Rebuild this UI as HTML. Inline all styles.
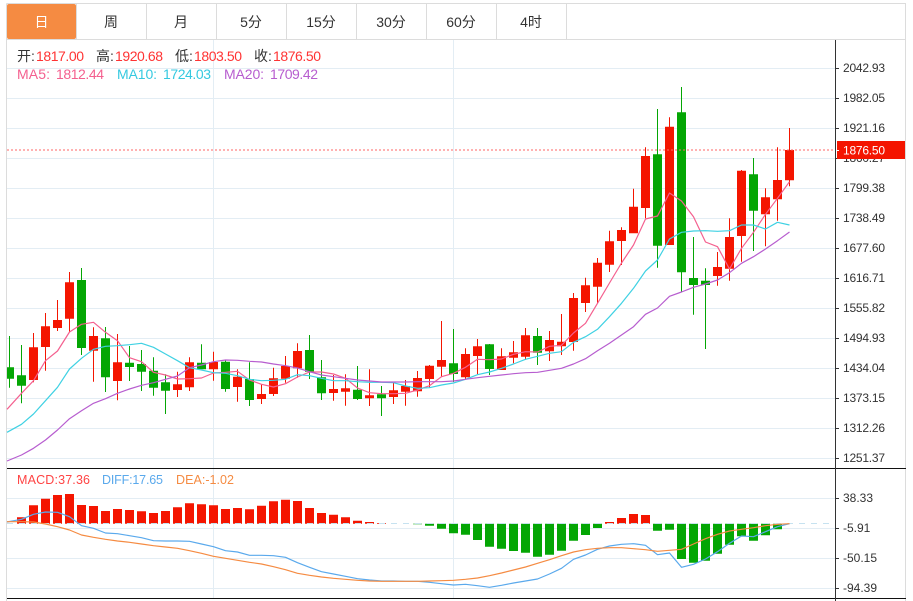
<!DOCTYPE html>
<html><head><meta charset="utf-8"><style>
html,body{margin:0;padding:0;background:#fff;width:913px;height:601px;overflow:hidden}
svg{display:block;font-family:"Liberation Sans","Noto Sans CJK SC",sans-serif}
.a{font-size:12px;fill:#333}
.h{font-size:14px}
.t{font-size:14px;fill:#333;text-anchor:middle}
.l{fill:none;stroke-width:1.2;stroke-linejoin:round}
</style></head><body>
<svg width="913" height="601" viewBox="0 0 913 601" xmlns="http://www.w3.org/2000/svg">
<path d="M7 68.5H835M7 98.5H835M7 128.5H835M7 158.5H835M7 188.5H835M7 218.5H835M7 248.5H835M7 278.5H835M7 308.5H835M7 338.5H835M7 368.5H835M7 398.5H835M7 428.5H835M7 458.5H835M7 498.5H835M7 528.5H835M7 558.5H835M7 588.5H835M213.5 40V598M453.5 40V598" stroke="#e3edf4" fill="none"/>
<path d="M6.5 3.5H905.5V601M6.5 3.5V601M6.5 39.5H905.5M76.5 3.5V39M146.5 3.5V39M216.5 3.5V39M286.5 3.5V39M356.5 3.5V39M426.5 3.5V39M496.5 3.5V39M566.5 3.5V39" stroke="#dcdcdc" fill="none"/>
<rect x="7" y="4" width="69" height="35" rx="2" fill="#f58b42"/>
<text x="41.5" y="27" class="t" style="fill:#fff">日</text>
<text x="111" y="27" class="t">周</text>
<text x="181" y="27" class="t">月</text>
<text x="251" y="27" class="t">5分</text>
<text x="321" y="27" class="t">15分</text>
<text x="391" y="27" class="t">30分</text>
<text x="461" y="27" class="t">60分</text>
<text x="531" y="27" class="t">4时</text>

<path fill="#04a604" d="M9 336h1V387.7h-1zM7 367.3h7V378.7h-7zM21 345h1V403.3h-1zM17 375.3h9V385.7h-9zM81 268h1V355h-1zM77 280h9V348h-9zM105 327h1V392h-1zM101 338.3h9V377.3h-9zM129 346h1V381h-1zM125 362.7h9V367h-9zM141 350h1V391h-1zM137 364h9V371.7h-9zM153 357.3h1V395.7h-1zM149 370.7h9V387.7h-9zM165 374.3h1V414h-1zM161 382.3h9V390.7h-9zM201 344.3h1V369.3h-1zM197 362.7h9V369.3h-9zM225 360h1V391.7h-1zM221 361.7h9V389h-9zM249 362.3h1V406h-1zM245 379h9V400h-9zM309 335h1V379h-1zM305 350h9V371.7h-9zM321 360h1V400h-1zM317 377.3h9V393.3h-9zM357 366h1V400h-1zM353 389.7h9V399h-9zM381 386h1V416h-1zM377 394.3h9V398.3h-9zM453 329h1V382h-1zM449 363.3h9V374h-9zM489 344h1V375h-1zM485 344.3h9V369h-9zM537 328h1V365h-1zM533 336h9V352.7h-9zM657 109h1V267.7h-1zM653 154.3h9V245.7h-9zM681 87h1V291.7h-1zM677 112.3h9V272.3h-9zM693 237h1V314.7h-1zM689 278h9V285h-9zM705 268.3h1V349h-1zM701 280.7h9V285h-9zM753 158h1V251h-1zM749 174.3h9V210.7h-9z"/>
<path fill="#f41500" d="M33 333h1V382.3h-1zM29 347.3h9V380h-9zM45 313h1V370.7h-1zM41 326.3h9V347h-9zM57 300h1V331h-1zM53 320h9V328h-9zM69 272h1V331.7h-1zM65 282.3h9V318.7h-9zM93 327.3h1V381.7h-1zM89 336h9V350.7h-9zM117 334h1V400.3h-1zM113 362.3h9V381h-9zM177 371.7h1V397h-1zM173 384.3h9V390h-9zM189 357.3h1V391h-1zM185 362.3h9V387.3h-9zM213 351.7h1V380.7h-1zM209 362h9V369.3h-9zM237 369.3h1V401.7h-1zM233 376.7h9V387h-9zM261 384.3h1V404h-1zM257 394h9V399h-9zM273 367.7h1V396h-1zM269 378.3h9V394h-9zM285 356h1V382.7h-1zM281 366h9V378.7h-9zM297 343.3h1V377.7h-1zM293 351h9V368.3h-9zM333 375h1V400.7h-1zM329 389h9V393h-9zM345 374.3h1V405.7h-1zM341 388.3h9V391.7h-9zM369 369.3h1V406h-1zM365 395.3h9V398.3h-9zM393 382.3h1V404h-1zM389 390.3h9V397h-9zM405 380h1V405.7h-1zM401 386h9V391.7h-9zM417 371h1V396.7h-1zM413 378h9V391.3h-9zM429 365h1V387.7h-1zM425 365.7h9V379h-9zM441 321h1V376.7h-1zM437 360h9V366.7h-9zM465 348.3h1V379.3h-1zM461 354h9V377.3h-9zM477 339h1V374.3h-1zM473 346.3h9V356h-9zM501 348.3h1V370h-1zM497 356.3h9V370h-9zM513 341h1V363.3h-1zM509 352.3h9V357.7h-9zM525 328h1V360h-1zM521 335.3h9V356.7h-9zM549 331h1V361h-1zM545 340h9V351.3h-9zM561 314h1V355h-1zM557 341.7h9V346.3h-9zM573 293h1V350.7h-1zM569 298h9V342h-9zM585 277.7h1V312h-1zM581 285.3h9V303h-9zM597 258h1V303h-1zM593 262.7h9V286.7h-9zM609 230.7h1V272h-1zM605 241.3h9V264.7h-9zM621 227.3h1V265h-1zM617 230h9V241h-9zM633 188.7h1V233.3h-1zM629 206.7h9V233.3h-9zM645 147.3h1V218.3h-1zM641 156h9V208h-9zM669 117.3h1V245h-1zM665 126.7h9V245h-9zM717 252h1V285.7h-1zM713 267h9V276h-9zM729 218.3h1V280.7h-1zM725 237h9V268.7h-9zM741 170h1V261.7h-1zM737 170.7h9V236h-9zM765 188.3h1V246.3h-1zM761 197.3h9V214.3h-9zM777 147.3h1V220.7h-1zM773 180h9V199.3h-9zM789 128h1V186.3h-1zM785 150h9V180.3h-9z"/>

<polyline class="l" stroke="#f4608f" points="7,409.3 21.5,393.3 33.5,380.7 45.5,360.7 57.5,351 69.5,332 81.5,324.3 93.5,322.3 105.5,332.3 117.5,340.7 129.5,357.7 141.5,361.7 153.5,372.3 165.5,375 177.5,379 189.5,378.7 201.5,378 213.5,373 225.5,372.3 237.5,371.3 249.5,380 261.5,384.3 273.5,387 285.5,383.7 297.5,377 309.5,372 321.5,372 333.5,374 345.5,378.3 357.5,388 369.5,392.7 381.5,393.7 393.5,393.7 405.5,393.3 417.5,390 429.5,385.7 441.5,376.7 453.5,373.3 465.5,367.3 477.5,359.3 489.5,359.7 501.5,359 513.5,354.3 525.5,351.7 537.5,352 549.5,346.3 561.5,345.3 573.5,333 585.5,323.3 597.5,303.3 609.5,283 621.5,263 633.5,245 645.5,219 657.5,216 669.5,193 681.5,201 693.5,216.7 705.5,242 717.5,246.7 729.5,269 741.5,248.3 753.5,232.3 765.5,214.3 777.5,198.3 789.5,181.7"/>
<polyline class="l" stroke="#3fd1e3" points="7,432.3 21.5,424.3 33.5,414 45.5,400.7 57.5,387.3 69.5,369 81.5,358.3 93.5,349.3 105.5,346.3 117.5,345.7 129.5,344.7 141.5,343.3 153.5,347.3 165.5,354 177.5,360.7 189.5,367.7 201.5,370 213.5,372.7 225.5,373.3 237.5,375.7 249.5,379.3 261.5,380.7 273.5,380.3 285.5,379.3 297.5,374.7 309.5,375.7 321.5,378.3 333.5,380.7 345.5,380.7 357.5,381.7 369.5,382.3 381.5,382.3 393.5,382.7 405.5,386 417.5,388.3 429.5,387.7 441.5,385 453.5,383 465.5,379.3 477.5,374.7 489.5,372 501.5,368.3 513.5,364 525.5,359.3 537.5,356.3 549.5,353.3 561.5,351.7 573.5,342.3 585.5,336.7 597.5,329.3 609.5,316.7 621.5,303.3 633.5,288.3 645.5,271 657.5,260 669.5,239 681.5,232.3 693.5,231 705.5,230.7 717.5,231.3 729.5,230.7 741.5,225 753.5,225 765.5,229 777.5,222.3 789.5,225"/>
<polyline class="l" stroke="#b75dcf" points="7,461 21.5,455 33.5,448.3 45.5,440 57.5,430 69.5,418.7 81.5,410.7 93.5,403.3 105.5,398.7 117.5,393.3 129.5,389 141.5,385.3 153.5,382.7 165.5,379.3 177.5,376 189.5,367.7 201.5,365 213.5,361.7 225.5,360 237.5,360.3 249.5,361.3 261.5,362 273.5,364 285.5,365.7 297.5,368 309.5,371.7 321.5,375 333.5,376.7 345.5,378.3 357.5,380 369.5,381 381.5,382 393.5,382 405.5,382 417.5,381.7 429.5,381.7 441.5,381.7 453.5,381 465.5,379.3 477.5,377.7 489.5,376.3 501.5,375 513.5,373.7 525.5,372.7 537.5,372.3 549.5,370.3 561.5,368.3 573.5,364 585.5,358.7 597.5,350.7 609.5,343.3 621.5,335 633.5,326.7 645.5,314.3 657.5,308 669.5,296.3 681.5,292 693.5,287.3 705.5,284 717.5,280 729.5,272.7 741.5,263.3 753.5,256.7 765.5,249 777.5,240.7 789.5,232"/>

<path fill="#f41500" d="M17 517.3h9V523.7h-9zM29 505.3h9V523.7h-9zM41 498.7h9V523.7h-9zM53 495h9V523.7h-9zM65 494h9V523.7h-9zM77 505h9V523.7h-9zM89 506h9V523.7h-9zM101 511h9V523.7h-9zM113 509h9V523.7h-9zM125 510h9V523.7h-9zM137 511.3h9V523.7h-9zM149 513h9V523.7h-9zM161 511h9V523.7h-9zM173 507.3h9V523.7h-9zM185 503.3h9V523.7h-9zM197 504.3h9V523.7h-9zM209 505.3h9V523.7h-9zM221 509h9V523.7h-9zM233 508h9V523.7h-9zM245 509.3h9V523.7h-9zM257 505.7h9V523.7h-9zM269 501.3h9V523.7h-9zM281 499.7h9V523.7h-9zM293 501h9V523.7h-9zM305 508h9V523.7h-9zM317 513h9V523.7h-9zM329 514.7h9V523.7h-9zM341 517.3h9V523.7h-9zM353 520.7h9V523.7h-9zM365 522h9V523.7h-9zM377 523h9V523.7h-9zM605 522h9V523.7h-9zM617 518h9V523.7h-9zM629 514h9V523.7h-9zM641 515h9V523.7h-9z"/>
<path fill="#04a604" d="M413 523.7h9V524.3h-9zM425 523.7h9V525.7h-9zM437 523.7h9V528.7h-9zM449 523.7h9V533.3h-9zM461 523.7h9V534.7h-9zM473 523.7h9V540h-9zM485 523.7h9V546.7h-9zM497 523.7h9V548.7h-9zM509 523.7h9V551h-9zM521 523.7h9V552.7h-9zM533 523.7h9V556.7h-9zM545 523.7h9V554.7h-9zM557 523.7h9V550.7h-9zM569 523.7h9V540.7h-9zM581 523.7h9V535h-9zM593 523.7h9V528h-9zM653 523.7h9V530.7h-9zM665 523.7h9V529.7h-9zM677 523.7h9V559h-9zM689 523.7h9V562.7h-9zM701 523.7h9V560.7h-9zM713 523.7h9V553.7h-9zM725 523.7h9V544.7h-9zM737 523.7h9V536.3h-9zM749 523.7h9V540.7h-9zM761 523.7h9V535.3h-9zM773 523.7h9V529.3h-9z"/>
<path d="M7 523.5H835" stroke="#c6e2f0" stroke-dasharray="6 6" fill="none"/>
<polyline class="l" stroke="#5aa9ec" points="7,522 21.5,519.3 33.5,514.3 45.5,512 57.5,512.3 69.5,516.7 81.5,525.7 93.5,528.3 105.5,533 117.5,533.7 129.5,535.7 141.5,537.7 153.5,540.7 165.5,541 177.5,541 189.5,541.3 201.5,544 213.5,546.7 225.5,550.7 237.5,552 249.5,555.3 261.5,555.3 273.5,555.7 285.5,557.3 297.5,562.7 309.5,567.3 321.5,571.7 333.5,574 345.5,576.3 357.5,578.7 369.5,580 381.5,581 393.5,581 405.5,581.3 417.5,581.3 429.5,582.3 441.5,583.7 453.5,585 465.5,584.3 477.5,585.7 489.5,587.3 501.5,585.3 513.5,583 525.5,581 537.5,579 549.5,574 561.5,568.3 573.5,559.3 585.5,555 597.5,549.3 609.5,546 621.5,544.3 633.5,543.7 645.5,545.3 657.5,554.7 669.5,553 681.5,567.3 693.5,564.3 705.5,559 717.5,551.7 729.5,543.3 741.5,536 753.5,536.7 765.5,531.7 777.5,526.7 789.5,523.7"/>
<polyline class="l" stroke="#f58b42" points="7,521.7 21.5,521.7 33.5,522 45.5,524 57.5,526.7 69.5,530 81.5,535 93.5,537.3 105.5,539.3 117.5,541 129.5,542.3 141.5,544 153.5,545.7 165.5,547 177.5,548.3 189.5,550.7 201.5,553.3 213.5,556.3 225.5,558.3 237.5,560.3 249.5,562.3 261.5,564 273.5,566.7 285.5,569.7 297.5,573.3 309.5,575.3 321.5,577 333.5,578.3 345.5,579.3 357.5,580.3 369.5,581 381.5,581.3 393.5,581.3 405.5,581.3 417.5,581.3 429.5,581 441.5,580.7 453.5,580.3 465.5,579.3 477.5,578 489.5,575.7 501.5,573 513.5,570 525.5,567 537.5,563.3 549.5,559.7 561.5,555.7 573.5,552 585.5,549.7 597.5,548.3 609.5,547.7 621.5,547.7 633.5,548.7 645.5,549.7 657.5,551.3 669.5,550.3 681.5,549.3 693.5,544 705.5,538.7 717.5,534.3 729.5,531 741.5,529.3 753.5,527.7 765.5,525.7 777.5,524.3 789.5,523.7"/>

<path d="M7 150H835" stroke="#f66" stroke-dasharray="2 2" fill="none"/>
<path d="M7 468.5H906M7 598.5H906" stroke="#111" fill="none"/>
<path d="M835.5 40V601M836 68.5h3M836 98.5h3M836 128.5h3M836 158.5h3M836 188.5h3M836 218.5h3M836 248.5h3M836 278.5h3M836 308.5h3M836 338.5h3M836 368.5h3M836 398.5h3M836 428.5h3M836 458.5h3M836 498.5h3M836 528.5h3M836 558.5h3M836 588.5h3" stroke="#333" fill="none"/>

<g class="a">
<text x="843" y="72" textLength="42">2042.93</text>
<text x="843" y="102" textLength="42">1982.05</text>
<text x="843" y="132" textLength="42">1921.16</text>
<text x="843" y="162" textLength="42">1860.27</text>
<text x="843" y="192" textLength="42">1799.38</text>
<text x="843" y="222" textLength="42">1738.49</text>
<text x="843" y="252" textLength="42">1677.60</text>
<text x="843" y="282" textLength="42">1616.71</text>
<text x="843" y="312" textLength="42">1555.82</text>
<text x="843" y="342" textLength="42">1494.93</text>
<text x="843" y="372" textLength="42">1434.04</text>
<text x="843" y="402" textLength="42">1373.15</text>
<text x="843" y="432" textLength="42">1312.26</text>
<text x="843" y="462" textLength="42">1251.37</text>
<text x="843" y="502">38.33</text>
<text x="843" y="532">-5.91</text>
<text x="843" y="562">-50.15</text>
<text x="843" y="592">-94.39</text>
</g>
<rect x="837" y="141" width="68" height="18" fill="#f41500"/>
<path d="M836 150.5h3" stroke="#fff"/>
<text x="843" y="154.5" class="a" style="fill:#fff" textLength="42">1876.50</text>

<g class="h">
<text x="17" y="61" fill="#333">开:</text><text x="36" y="61" fill="#f33" textLength="48">1817.00</text>
<text x="96" y="61" fill="#333">高:</text><text x="115" y="61" fill="#f33" textLength="48">1920.68</text>
<text x="175" y="61" fill="#333">低:</text><text x="194" y="61" fill="#f33" textLength="48">1803.50</text>
<text x="254" y="61" fill="#333">收:</text><text x="273" y="61" fill="#f33" textLength="48">1876.50</text>
<text x="17" y="79" fill="#f4608f" textLength="33">MA5:</text><text x="56" y="79" fill="#f4608f" textLength="48">1812.44</text>
<text x="117" y="79" fill="#35c9e0" textLength="40">MA10:</text><text x="163" y="79" fill="#35c9e0" textLength="48">1724.03</text>
<text x="224" y="79" fill="#b75dcf" textLength="40">MA20:</text><text x="270" y="79" fill="#b75dcf" textLength="48">1709.42</text>
</g>
<g style="font-size:12.5px">
<text x="17" y="484" fill="#f44" textLength="73">MACD:37.36</text>
<text x="102" y="484" fill="#5aa9ec" textLength="61">DIFF:17.65</text>
<text x="176" y="484" fill="#f58b42" textLength="58">DEA:-1.02</text>
</g>
</svg>
</body></html>
